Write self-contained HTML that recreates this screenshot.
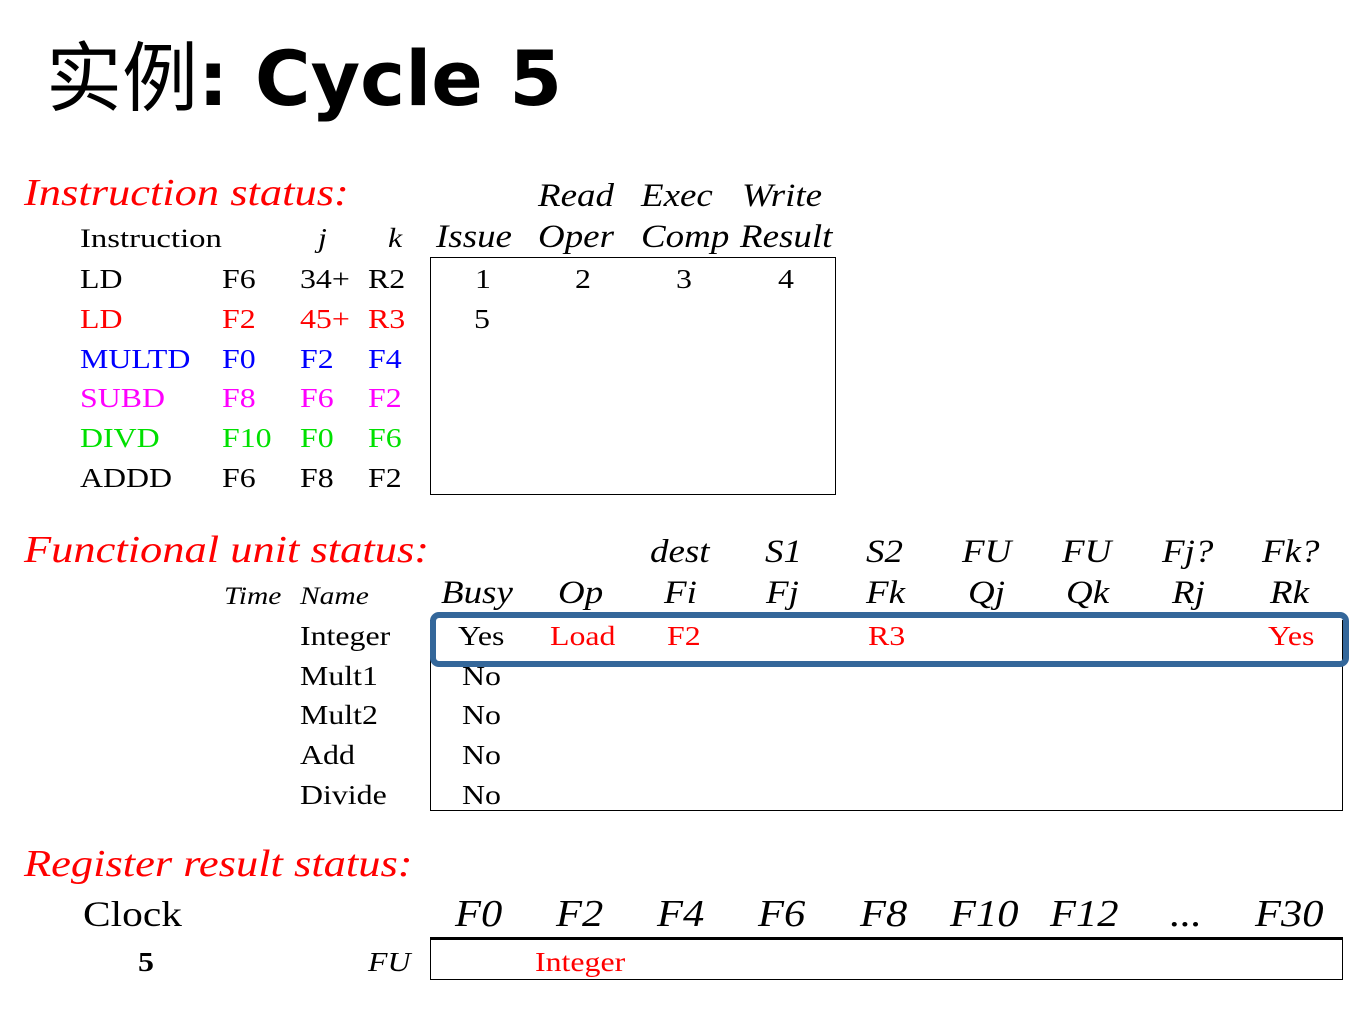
<!DOCTYPE html>
<html><head><meta charset="utf-8"><style>
html,body{margin:0;padding:0;background:#fff;}
body{width:1350px;height:1019px;position:relative;overflow:hidden;font-family:"Liberation Serif",serif;}
.t{position:absolute;white-space:nowrap;font-size:27px;line-height:27px;transform:scaleX(1.18);transform-origin:0 0;color:#000;}
.i{font-style:italic;}
.h{font-size:33px;line-height:33px;font-style:italic;transform:scaleX(1.12);}
.s{font-size:38px;line-height:38px;font-style:italic;color:#f00;transform:scaleX(1.17);}
.r{color:#f00}.b{color:#00f}.m{color:#f0f}.g{color:#00e000}
.box{position:absolute;border:1.5px solid #000;}
</style></head><body>
<div style="position:absolute;left:46px;top:24px;font-size:76px;line-height:96px;white-space:nowrap;"><span style="font-family:'WenQuanYi Zen Hei','Noto Sans CJK SC',sans-serif;">实例</span><span style="font-family:'DejaVu Sans',sans-serif;font-weight:bold;">: Cycle 5</span></div>

<div class="t s" style="left:24px;top:174px">Instruction status:</div>
<div class="t h" style="left:538px;top:180px">Read</div>
<div class="t h" style="left:641px;top:180px">Exec</div>
<div class="t h" style="left:742px;top:180px">Write</div>
<div class="t" style="left:80px;top:225px;font-size:26px;transform:scaleX(1.26)">Instruction</div>
<div class="t i" style="left:318px;top:225px">j</div>
<div class="t i" style="left:388px;top:225px">k</div>
<div class="t h" style="left:436px;top:221px">Issue</div>
<div class="t h" style="left:538px;top:221px">Oper</div>
<div class="t h" style="left:641px;top:221px">Comp</div>
<div class="t h" style="left:740px;top:221px">Result</div>

<div class="box" style="left:430px;top:257px;width:404px;height:236px"></div>

<div class="t" style="left:80px;top:266px">LD</div><div class="t" style="left:222px;top:266px">F6</div><div class="t" style="left:300px;top:266px">34+</div><div class="t" style="left:368px;top:266px">R2</div>
<div class="t r" style="left:80px;top:306px">LD</div><div class="t r" style="left:222px;top:306px">F2</div><div class="t r" style="left:300px;top:306px">45+</div><div class="t r" style="left:368px;top:306px">R3</div>
<div class="t b" style="left:80px;top:346px">MULTD</div><div class="t b" style="left:222px;top:346px">F0</div><div class="t b" style="left:300px;top:346px">F2</div><div class="t b" style="left:368px;top:346px">F4</div>
<div class="t m" style="left:80px;top:385px">SUBD</div><div class="t m" style="left:222px;top:385px">F8</div><div class="t m" style="left:300px;top:385px">F6</div><div class="t m" style="left:368px;top:385px">F2</div>
<div class="t g" style="left:80px;top:425px">DIVD</div><div class="t g" style="left:222px;top:425px">F10</div><div class="t g" style="left:300px;top:425px">F0</div><div class="t g" style="left:368px;top:425px">F6</div>
<div class="t" style="left:80px;top:465px">ADDD</div><div class="t" style="left:222px;top:465px">F6</div><div class="t" style="left:300px;top:465px">F8</div><div class="t" style="left:368px;top:465px">F2</div>
<div class="t" style="left:475px;top:266px">1</div><div class="t" style="left:575px;top:266px">2</div><div class="t" style="left:676px;top:266px">3</div><div class="t" style="left:778px;top:266px">4</div>
<div class="t" style="left:474px;top:306px">5</div>

<div class="t s" style="left:24px;top:531px">Functional unit status:</div>
<div class="t h" style="left:650px;top:536px">dest</div>
<div class="t h" style="left:765px;top:536px">S1</div>
<div class="t h" style="left:866px;top:536px">S2</div>
<div class="t h" style="left:962px;top:536px">FU</div>
<div class="t h" style="left:1062px;top:536px">FU</div>
<div class="t h" style="left:1162px;top:536px">Fj?</div>
<div class="t h" style="left:1262px;top:536px">Fk?</div>
<div class="t i" style="left:224px;top:583px;font-size:25px">Time</div>
<div class="t i" style="left:300px;top:583px;font-size:25px">Name</div>
<div class="t h" style="left:441px;top:577px">Busy</div>
<div class="t h" style="left:558px;top:577px">Op</div>
<div class="t h" style="left:664px;top:577px">Fi</div>
<div class="t h" style="left:766px;top:577px">Fj</div>
<div class="t h" style="left:866px;top:577px">Fk</div>
<div class="t h" style="left:968px;top:577px">Qj</div>
<div class="t h" style="left:1066px;top:577px">Qk</div>
<div class="t h" style="left:1172px;top:577px">Rj</div>
<div class="t h" style="left:1270px;top:577px">Rk</div>

<div class="box" style="left:430px;top:620px;width:911px;height:190px;border-top:none"></div>
<div style="position:absolute;left:430px;top:612px;width:907px;height:43px;border:6px solid #34679a;border-radius:9px;"></div>

<div class="t" style="left:300px;top:623px">Integer</div>
<div class="t" style="left:300px;top:663px">Mult1</div>
<div class="t" style="left:300px;top:702px">Mult2</div>
<div class="t" style="left:300px;top:742px">Add</div>
<div class="t" style="left:300px;top:782px">Divide</div>
<div class="t" style="left:458px;top:623px">Yes</div>
<div class="t r" style="left:550px;top:623px">Load</div>
<div class="t r" style="left:667px;top:623px">F2</div>
<div class="t r" style="left:868px;top:623px">R3</div>
<div class="t r" style="left:1268px;top:623px">Yes</div>
<div class="t" style="left:462px;top:663px">No</div>
<div class="t" style="left:462px;top:702px">No</div>
<div class="t" style="left:462px;top:742px">No</div>
<div class="t" style="left:462px;top:782px">No</div>

<div class="t s" style="left:24px;top:845px">Register result status:</div>
<div class="t" style="left:83px;top:896px;font-size:36px;line-height:36px;transform:scaleX(1.15)">Clock</div>
<div class="t h" style="left:455px;top:895px;font-size:38px;line-height:38px">F0</div>
<div class="t h" style="left:556px;top:895px;font-size:38px;line-height:38px">F2</div>
<div class="t h" style="left:657px;top:895px;font-size:38px;line-height:38px">F4</div>
<div class="t h" style="left:758px;top:895px;font-size:38px;line-height:38px">F6</div>
<div class="t h" style="left:860px;top:895px;font-size:38px;line-height:38px">F8</div>
<div class="t h" style="left:950px;top:895px;font-size:38px;line-height:38px">F10</div>
<div class="t h" style="left:1050px;top:895px;font-size:38px;line-height:38px">F12</div>
<div class="t h" style="left:1170px;top:895px;font-size:38px;line-height:38px">...</div>
<div class="t h" style="left:1255px;top:895px;font-size:38px;line-height:38px">F30</div>
<div class="box" style="left:430px;top:937px;width:911px;height:39px;border-top:3px solid #000"></div>
<div class="t" style="left:138px;top:949px;font-weight:bold">5</div>
<div class="t i" style="left:368px;top:949px">FU</div>
<div class="t r" style="left:535px;top:949px">Integer</div>
</body></html>
